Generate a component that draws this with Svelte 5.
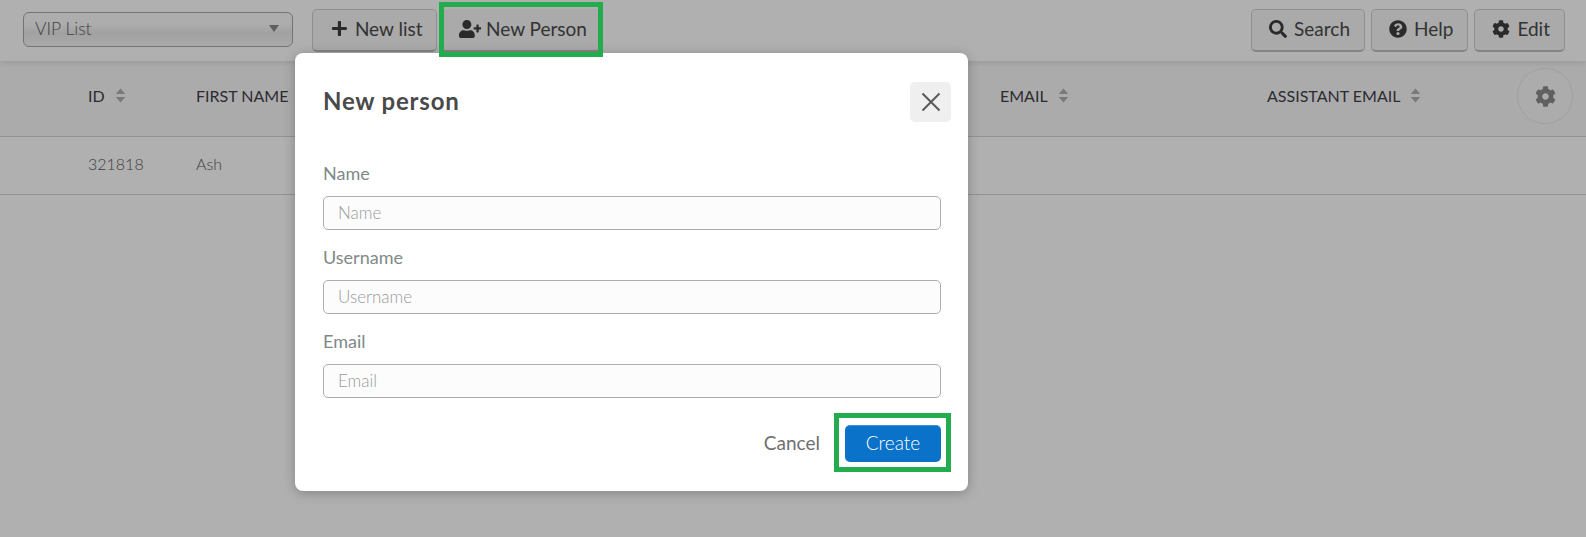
<script>
  const columns = [
    { label: 'ID', width: 108 },
    { label: 'FIRST NAME', width: 804 },
    { label: 'EMAIL', width: 267 },
    { label: 'ASSISTANT EMAIL', width: 240 }
  ];
  const fields = ['Name', 'Username', 'Email'];
  const icons = {
    plus: { box: '0 0 448 512', d: 'M416 208H272V64c0-17.67-14.33-32-32-32h-32c-17.67 0-32 14.33-32 32v144H32c-17.67 0-32 14.33-32 32v32c0 17.67 14.33 32 32 32h144v144c0 17.67 14.33 32 32 32h32c17.67 0 32-14.33 32-32V304h144c17.67 0 32-14.33 32-32v-32c0-17.67-14.33-32-32-32z' },
    userPlus: { box: '0 0 640 512', d: 'M624 208h-64v-64c0-8.8-7.2-16-16-16h-32c-8.8 0-16 7.2-16 16v64h-64c-8.8 0-16 7.2-16 16v32c0 8.8 7.2 16 16 16h64v64c0 8.8 7.2 16 16 16h32c8.8 0 16-7.2 16-16v-64h64c8.8 0 16-7.2 16-16v-32c0-8.8-7.2-16-16-16zm-400 48c70.7 0 128-57.3 128-128S294.7 0 224 0 96 57.3 96 128s57.3 128 128 128zm89.6 32h-16.7c-22.2 10.2-46.9 16-72.9 16s-50.6-5.8-72.9-16h-16.7C60.2 288 0 348.2 0 422.4V464c0 26.5 21.5 48 48 48h352c26.5 0 48-21.5 48-48v-41.6c0-74.2-60.2-134.4-134.4-134.4z' },
    search: { box: '0 0 512 512', d: 'M505 442.7L405.3 343c-4.5-4.5-10.6-7-17-7H372c27.6-35.3 44-79.7 44-128C416 93.1 322.9 0 208 0S0 93.1 0 208s93.1 208 208 208c48.3 0 92.7-16.4 128-44v16.3c0 6.4 2.5 12.5 7 17l99.7 99.7c9.4 9.4 24.6 9.4 33.9 0l28.3-28.3c9.4-9.4 9.4-24.6.1-34zM208 336c-70.7 0-128-57.2-128-128 0-70.7 57.2-128 128-128 70.7 0 128 57.2 128 128 0 70.7-57.2 128-128 128z' },
    help: { box: '0 0 512 512', d: 'M504 256c0 136.997-111.043 248-248 248S8 392.997 8 256C8 119.083 119.043 8 256 8s248 111.083 248 248zM262.655 90c-54.497 0-89.255 22.957-116.549 63.758-3.536 5.286-2.353 12.415 2.715 16.258l34.699 26.31c5.205 3.947 12.621 3.008 16.665-2.122 17.864-22.658 30.113-35.797 57.303-35.797 20.429 0 45.698 13.148 45.698 32.958 0 14.976-12.363 22.667-32.534 33.976C247.128 238.528 216 254.941 216 296v4c0 6.627 5.373 12 12 12h56c6.627 0 12-5.373 12-12v-1.333c0-28.462 83.186-29.647 83.186-106.667 0-58.002-60.165-102-116.531-102zM256 338c-25.365 0-46 20.635-46 46 0 25.364 20.635 46 46 46s46-20.636 46-46c0-25.365-20.635-46-46-46z' },
    cog: { box: '0 0 512 512', d: 'M487.4 315.7l-42.6-24.6c4.3-23.2 4.3-47 0-70.2l42.6-24.6c4.9-2.8 7.1-8.6 5.5-14-11.1-35.6-30-67.8-54.7-94.6-3.8-4.1-10-5.1-14.8-2.3L380.8 110c-17.9-15.4-38.5-27.3-60.8-35.1V25.8c0-5.6-3.9-10.5-9.4-11.7-36.7-8.2-74.3-7.8-109.2 0-5.5 1.2-9.4 6.1-9.4 11.7V75c-22.2 7.9-42.8 19.8-60.8 35.1L88.7 85.5c-4.9-2.8-11-1.9-14.8 2.3-24.7 26.7-43.6 58.9-54.7 94.6-1.7 5.4.6 11.2 5.5 14L67.3 221c-4.3 23.2-4.3 47 0 70.2l-42.6 24.6c-4.9 2.8-7.1 8.6-5.5 14 11.1 35.6 30 67.8 54.7 94.6 3.8 4.1 10 5.1 14.8 2.3l42.6-24.6c17.9 15.4 38.5 27.3 60.8 35.1v49.2c0 5.6 3.9 10.5 9.4 11.7 36.7 8.2 74.3 7.8 109.2 0 5.5-1.2 9.4-6.1 9.4-11.7v-49.2c22.2-7.9 42.8-19.8 60.8-35.1l42.6 24.6c4.9 2.8 11 1.9 14.8-2.3 24.7-26.7 43.6-58.9 54.7-94.6 1.5-5.5-.7-11.3-5.6-14.1zM256 336c-44.1 0-80-35.9-80-80s35.9-80 80-80 80 35.9 80 80-35.9 80-80 80z' }
  };
</script>

{#snippet icon(name, size)}
  <svg class="icon" viewBox={icons[name].box} height={size} aria-hidden="true"><path d={icons[name].d} /></svg>
{/snippet}

{#snippet sortArrows()}
  <svg class="sort" viewBox="0 0 10 16" width="11" height="17" aria-hidden="true">
    <path d="M5 1.5 L9.5 6.5 H0.5 Z M5 14.5 L9.5 9.5 H0.5 Z" />
  </svg>
{/snippet}

<div class="page">
  <header class="toolbar">
    <div class="select">
      <span>VIP List</span>
      <i class="caret"></i>
    </div>
    <div class="group">
      <button class="new-list">{@render icon('plus', 17)} <span>New list</span></button>
      <button class="person">{@render icon('userPlus', 18)} <span>New Person</span></button>
    </div>
    <div class="group right">
      <button>{@render icon('search', 18)} <span>Search</span></button>
      <button>{@render icon('help', 18)} <span>Help</span></button>
      <button>{@render icon('cog', 18)} <span>Edit</span></button>
    </div>
  </header>

  <div class="thead">
    {#each columns as col}
      <div class="th" style="width: {col.width}px">{col.label} {@render sortArrows()}</div>
    {/each}
    <div class="gear">{@render icon('cog', 21)}</div>
  </div>
  <div class="row">
    <div class="td" style="width: 108px">321818</div>
    <div class="td">Ash</div>
  </div>

  <div class="backdrop"></div>

  <div class="modal">
    <div class="modal-head">
      <h2>New person</h2>
      <button class="close" aria-label="Close">
        <svg viewBox="0 0 20 20" width="20" height="20"><path d="M1.5 1.5 L18.5 18.5 M18.5 1.5 L1.5 18.5" /></svg>
      </button>
    </div>
    <form class="fields">
      {#each fields as field}
        <label>
          {field}
          <input type="text" placeholder={field} />
        </label>
      {/each}
    </form>
    <div class="actions">
      <span class="cancel">Cancel</span>
      <div class="create-mark">
        <button class="create">Create</button>
      </div>
    </div>
  </div>

  <div class="mark mark-person"></div>
</div>

<style>
  :global(body) {
    margin: 0;
    background: #fff;
  }

  .page {
    position: relative;
    width: 1586px;
    height: 537px;
    overflow: hidden;
    font-family: Lato, "Liberation Sans", sans-serif;
    color: #555;
  }

  .toolbar {
    display: flex;
    align-items: flex-start;
    height: 61px;
    padding: 9px 21px 0 23px;
    box-sizing: border-box;
    background: #fff;
    box-shadow: 0 2px 6px rgba(0, 0, 0, 0.1);
    position: relative;
    z-index: 1;
  }

  .select {
    display: flex;
    align-items: center;
    justify-content: space-between;
    width: 270px;
    height: 35px;
    margin: 3px 19px 0 0;
    padding: 0 13px 2px 11px;
    box-sizing: border-box;
    border: 1px solid #a8a8a8;
    border-radius: 6px;
    font-size: 17.5px;
    font-weight: 300;
    color: #5e5e5e;
    background: linear-gradient(#fbfbfb 30%, #eaeaea 62%, #f6f6f6);
  }

  .caret {
    width: 0;
    height: 0;
    border-left: 5px solid transparent;
    border-right: 5px solid transparent;
    border-top: 7px solid #8a8a8a;
  }

  .group {
    display: flex;
    gap: 3px;
  }

  .right {
    margin-left: auto;
    gap: 6px;
  }

  button {
    font-family: inherit;
  }

  .group button {
    display: flex;
    align-items: center;
    gap: 7px;
    height: 43px;
    padding: 0 14px 3px 17px;
    box-sizing: border-box;
    border: 1px solid #d0d0d0;
    border-bottom: 2px solid #c0c0c0;
    border-radius: 5px;
    background: #f6f6f6;
    font-size: 19px;
    color: #4a4a4a;
  }

  .group .new-list {
    gap: 8px;
    padding: 0 13px 3px 19px;
  }

  .group .person {
    border-color: transparent;
    border-bottom-color: #c0c0c0;
    gap: 5px;
    padding-left: 18px;
  }

  .icon {
    fill: #3d3d3d;
    display: block;
  }

  .thead {
    position: relative;
    display: flex;
    align-items: center;
    height: 76px;
    padding-left: 88px;
    padding-bottom: 6px;
    box-sizing: border-box;
    background: #f8f8fa;
    border-bottom: 1px solid #d6d6d6;
  }

  .th {
    display: flex;
    align-items: center;
    gap: 10px;
    flex: none;
    font-size: 16px;
    color: #3f3f46;
  }

  .sort {
    fill: #b0b0b5;
  }

  .gear {
    position: absolute;
    top: 7px;
    left: 1517px;
    width: 56px;
    height: 56px;
    display: flex;
    align-items: center;
    justify-content: center;
    border: 1px solid #e8e8e8;
    box-sizing: border-box;
    border-radius: 50%;
    background: #fafafa;
  }

  .gear :global(.icon) {
    fill: #8c8c8c;
  }

  .row {
    display: flex;
    align-items: center;
    height: 58px;
    padding-left: 88px;
    padding-bottom: 4px;
    box-sizing: border-box;
    border-bottom: 1px solid #d6d6d6;
    font-size: 16px;
    font-weight: 300;
    color: #5a5a5a;
  }

  .td {
    flex: none;
  }

  .backdrop {
    position: absolute;
    inset: 0;
    z-index: 2;
    background: rgba(0, 0, 0, 0.31);
  }

  .mark {
    position: absolute;
    z-index: 4;
    border: 5px solid #22ac4d;
    box-sizing: border-box;
  }

  .mark-person {
    left: 439px;
    top: 2px;
    width: 164px;
    height: 55px;
  }

  .modal {
    position: absolute;
    z-index: 3;
    left: 295px;
    top: 53px;
    width: 673px;
    height: 438px;
    box-sizing: border-box;
    padding: 29px 27px 0 28px;
    background: #fff;
    border-radius: 8px;
    box-shadow: 0 2px 12px rgba(0, 0, 0, 0.25);
  }

  .modal-head {
    display: flex;
    align-items: center;
    justify-content: space-between;
    height: 40px;
  }

  h2 {
    margin: 0 0 4px;
    font-size: 24px;
    font-weight: 700;
    letter-spacing: 0.8px;
    color: #4a4a4a;
  }

  .close {
    display: flex;
    align-items: center;
    justify-content: center;
    width: 41px;
    height: 40px;
    margin-right: -10px;
    padding: 0;
    border: 0;
    border-radius: 5px;
    background: #efefef;
  }

  .close path {
    stroke: #5a5a5a;
    stroke-width: 2;
    fill: none;
  }

  .fields {
    display: flex;
    flex-direction: column;
    gap: 17px;
    margin-top: 41px;
  }

  label {
    display: flex;
    flex-direction: column;
    gap: 12px;
    font-size: 18px;
    line-height: 21px;
    color: #7f8a87;
  }

  input {
    height: 34px;
    padding: 0 14px 2px;
    box-sizing: border-box;
    border: 1px solid #adadad;
    border-radius: 5px;
    background: #fcfcfc;
    font-family: inherit;
    font-size: 17px;
    font-weight: 300;
  }

  input::placeholder {
    color: #9a9a9a;
    opacity: 1;
  }

  .actions {
    display: flex;
    justify-content: flex-end;
    align-items: center;
    gap: 14px;
    margin: 15px -10px 0 0;
  }

  .cancel {
    font-size: 19px;
    color: #6f6f6f;
  }

  .create-mark {
    padding: 7px 5px 5px 6px;
    border: 5px solid #22ac4d;
  }

  .create {
    display: block;
    width: 96px;
    height: 37px;
    padding: 0 0 3px;
    border: 0;
    border-top: 1px solid #3f8fd8;
    border-radius: 5px;
    background: #0a72c9;
    color: #fff;
    font-size: 19px;
    font-weight: 300;
  }
</style>
